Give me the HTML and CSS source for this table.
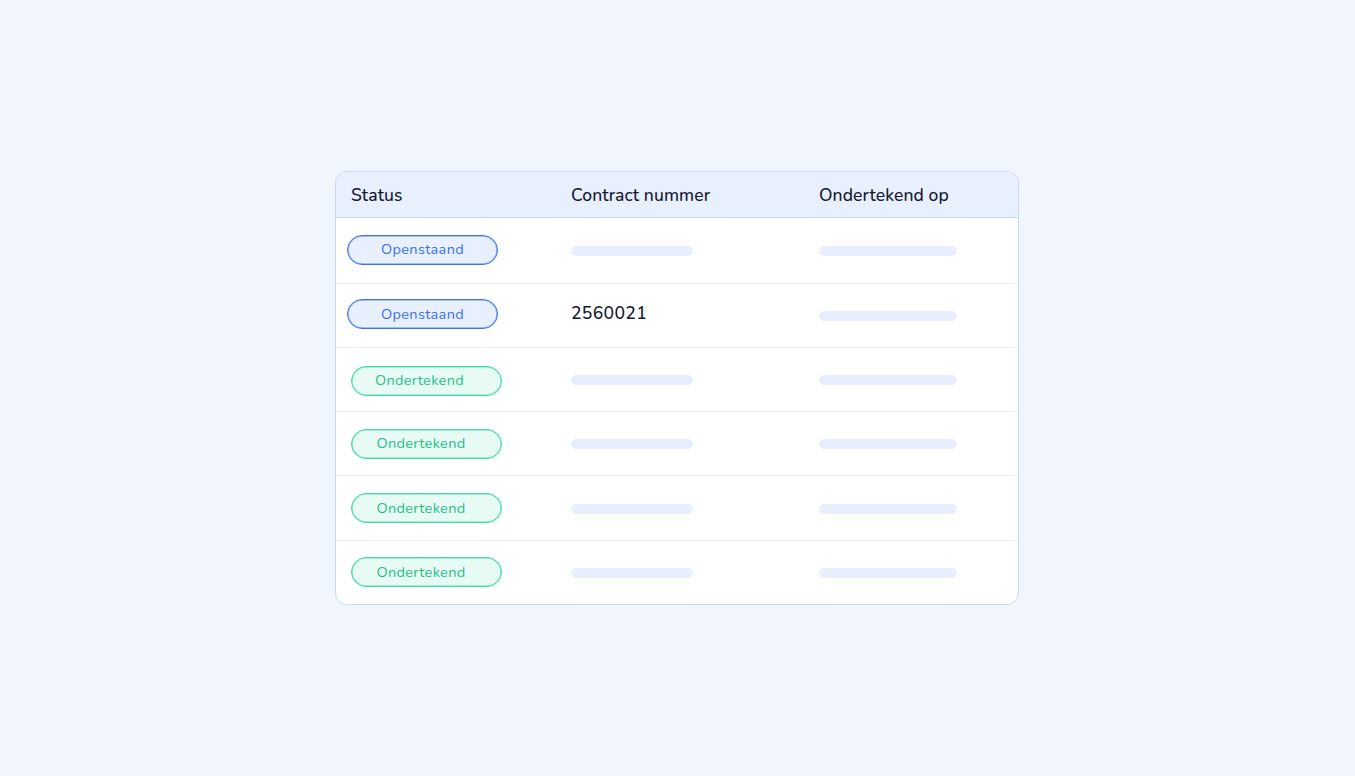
FILE: index.html
```html
<!DOCTYPE html>
<html lang="nl">
<head>
<meta charset="utf-8">
<title>Contracten</title>
<link rel="stylesheet" href="styles.css">
</head>
<body>
<main class="stage">
  <div class="card">
    <div class="row head">
      <div class="cell">Status</div>
      <div class="cell">Contract nummer</div>
      <div class="cell">Ondertekend op</div>
    </div>
    <div class="row">
      <div class="cell status"><span class="pill open">Openstaand</span></div>
      <div class="cell"><span class="skel short"></span></div>
      <div class="cell"><span class="skel long"></span></div>
    </div>
    <div class="row">
      <div class="cell status"><span class="pill open">Openstaand</span></div>
      <div class="cell num">2560021</div>
      <div class="cell"><span class="skel long"></span></div>
    </div>
    <div class="row">
      <div class="cell status"><span class="pill signed first">Ondertekend</span></div>
      <div class="cell"><span class="skel short"></span></div>
      <div class="cell"><span class="skel long"></span></div>
    </div>
    <div class="row">
      <div class="cell status"><span class="pill signed">Ondertekend</span></div>
      <div class="cell"><span class="skel short"></span></div>
      <div class="cell"><span class="skel long"></span></div>
    </div>
    <div class="row">
      <div class="cell status"><span class="pill signed">Ondertekend</span></div>
      <div class="cell"><span class="skel short"></span></div>
      <div class="cell"><span class="skel long"></span></div>
    </div>
    <div class="row">
      <div class="cell status"><span class="pill signed">Ondertekend</span></div>
      <div class="cell"><span class="skel short"></span></div>
      <div class="cell"><span class="skel long"></span></div>
    </div>
  </div>
</main>
</body>
</html>
```
FILE: styles.css
```css
* { box-sizing: border-box; }
html, body { margin: 0; padding: 0; }
body {
  background: #f0f5fe;
  font-family: "Nunito", "Lato", "Open Sans", sans-serif;
  color: #141833;
}
.stage {
  width: 1355px;
  height: 776px;
  padding-top: 171px;
  padding-left: 335px;
  display: flex;
}
.card {
  width: 684px;
  height: 434px;
  background: #ffffff;
  border: 1.5px solid #c9d8f3;
  border-radius: 12px;
  overflow: hidden;
  display: flex;
  flex-direction: column;
}
.row {
  display: grid;
  grid-template-columns: 220px 248px 1fr;
  align-items: center;
  height: 64.3px;
  border-top: 1px solid #e8eefb;
}
.row.head {
  height: 46.5px;
  border-top: none;
  background: #e8effd;
  border-bottom: 1px solid #c9d8f3;
  font-size: 17.5px;
  font-weight: 500;
  letter-spacing: 0.1px;
}
.row.head + .row { border-top: none; }
.cell {
  padding-left: 15px;
  display: flex;
  align-items: center;
}
.status { padding-left: 11px; }
.num {
  font-size: 17.6px;
  font-weight: 500;
  letter-spacing: 0.3px;
  margin-top: -5px;
}
.pill {
  display: inline-flex;
  align-items: center;
  justify-content: center;
  width: 151px;
  height: 30px;
  border-radius: 15px;
  font-size: 14.5px;
  font-weight: 400;
  letter-spacing: 0.35px;
  padding-bottom: 1px;
}
.pill.open {
  background: #e8effd;
  border: 1px solid #3b74f6;
  box-shadow: inset 0 0 0 0.8px rgba(59, 116, 246, 0.55);
  color: #3a6ff4;
  margin-top: -2px;
}
.pill.signed {
  background: #e8faf4;
  border: 1px solid #3ddcaa;
  box-shadow: inset 0 0 0 0.8px rgba(61, 220, 170, 0.55);
  color: #1dc08b;
  margin-left: 4px;
  padding-right: 11px;
}
.pill.signed.first { padding-right: 14px; margin-top: 2px; }
.skel {
  display: block;
  height: 10px;
  border-radius: 5px;
  background: #e8eefc;
  margin-top: 1px;
}
.skel.short { width: 122px; }
.skel.long { width: 138px; }
```
